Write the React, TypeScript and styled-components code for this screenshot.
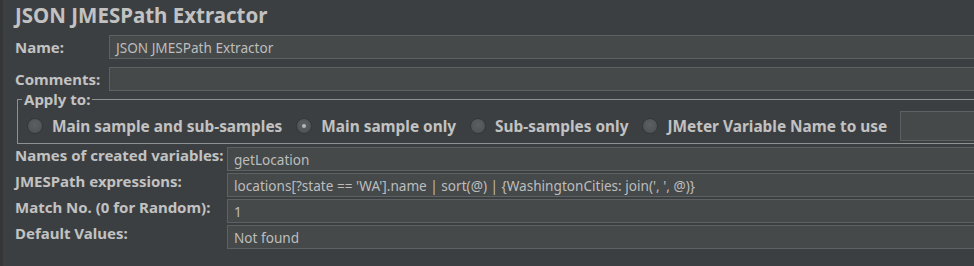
import React from 'react'
import styled, { createGlobalStyle } from 'styled-components'

const GlobalStyle = createGlobalStyle`
  html, body {
    margin: 0;
    padding: 0;
    background: #3c3f41;
    overflow: hidden;
  }
  body {
    font-family: 'Noto Sans', 'Open Sans', sans-serif;
    color: #bdbdbd;
  }
`

const Page = styled.div`
  width: 1000px;
  height: 266px;
  box-sizing: border-box;
  border-left: 3px solid #343638;
  padding-left: 12px;
  background: #3c3f41;
`

const Title = styled.div`
  font-size: 20.5px;
  font-weight: 700;
  line-height: 26px;
  padding-top: 2px;
  height: 33px;
  box-sizing: border-box;
  color: #c2c2c2;
`

const TopGrid = styled.div`
  display: grid;
  grid-template-columns: 94px 1fr;
  grid-auto-rows: 24px;
  row-gap: 8px;
  margin-top: 2px;
`

const Label = styled.div<{ $top?: boolean }>`
  font-size: 15px;
  font-weight: 700;
  line-height: ${(p) => (p.$top ? '16px' : '24px')};
  white-space: nowrap;
  align-self: ${(p) => (p.$top ? 'start' : 'center')};
  color: #c2c2c2;
`

const Field = styled.div`
  box-sizing: border-box;
  height: 24px;
  border: 1px solid #5e6162;
  background: #45494a;
  font-size: 13.6px;
  line-height: 22px;
  padding: 1px 6px 0 6px;
  white-space: nowrap;
  overflow: hidden;
  color: #bdbdbd;
`

const Group = styled.fieldset`
  margin: 0 0 0 2px;
  padding: 4px 0 2px 9px;
  border: 1px solid #8e9192;
  border-right: none;
  min-width: 0;
`

const Legend = styled.legend`
  font-size: 15px;
  font-weight: 700;
  line-height: 16px;
  padding: 0 2px;
  margin-left: -5px;
  color: #c2c2c2;
`

const RadioRow = styled.div`
  display: flex;
  align-items: center;
  height: 30px;
`

const Option = styled.label`
  display: flex;
  align-items: center;
  gap: 9px;
  margin-right: 14px;
  font-size: 15.4px;
  font-weight: 700;
  white-space: nowrap;
  color: #c2c2c2;
`

const Radio = styled.span<{ $checked?: boolean }>`
  width: 16px;
  height: 16px;
  box-sizing: border-box;
  border-radius: 50%;
  border: 1px solid #35383a;
  background: radial-gradient(circle at 50% 40%, #5d6062, #4b4e50);
  display: flex;
  align-items: center;
  justify-content: center;
  &::after {
    content: '';
    width: 4px;
    height: 4px;
    border-radius: 50%;
    background: #b4b6b7;
    display: ${(p) => (p.$checked ? 'block' : 'none')};
  }
`

const VarField = styled(Field)`
  height: 30px;
  width: 100px;
  margin-left: -1px;
`

const BottomGrid = styled.div`
  display: grid;
  grid-template-columns: 212px 1fr;
  grid-auto-rows: 24px;
  row-gap: 2px;
  margin-top: 3px;
`

const radios = [
  'Main sample and sub-samples',
  'Main sample only',
  'Sub-samples only',
  'JMeter Variable Name to use',
]

const rows: [string, string][] = [
  ['Names of created variables:', 'getLocation'],
  ['JMESPath expressions:', "locations[?state == 'WA'].name | sort(@) | {WashingtonCities: join(', ', @)}"],
  ['Match No. (0 for Random):', '1'],
  ['Default Values:', 'Not found'],
]

export default function App() {
  return (
    <Page>
      <GlobalStyle />
      <Title>JSON JMESPath Extractor</Title>
      <TopGrid>
        <Label>Name:</Label>
        <Field>JSON JMESPath Extractor</Field>
        <Label>Comments:</Label>
        <Field />
      </TopGrid>
      <Group>
        <Legend>Apply to:</Legend>
        <RadioRow>
          {radios.map((r, i) => (
            <Option key={r}>
              <Radio $checked={i === 1} />
              {r}
            </Option>
          ))}
          <VarField />
        </RadioRow>
      </Group>
      <BottomGrid>
        {rows.map(([label, value]) => (
          <React.Fragment key={label}>
            <Label $top>{label}</Label>
            <Field>{value}</Field>
          </React.Fragment>
        ))}
      </BottomGrid>
    </Page>
  )
}
